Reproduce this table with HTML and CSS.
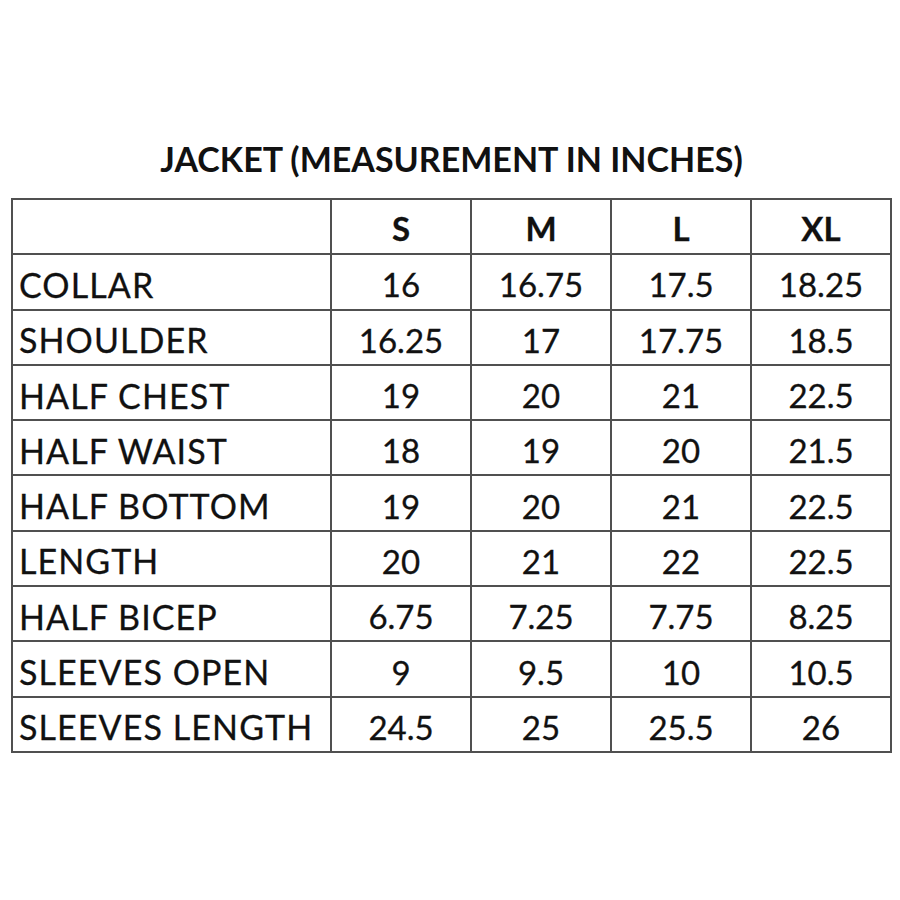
FILE: index.html
```html
<!DOCTYPE html>
<html>
<head>
<meta charset="utf-8">
<link rel="stylesheet" href="styles.css">
</head>
<body>
<div class="page">
  <h1 class="title">JACKET (MEASUREMENT IN INCHES)</h1>
  <table class="chart">
    <colgroup>
      <col class="c-label"><col class="c-size"><col class="c-size"><col class="c-size"><col class="c-size">
    </colgroup>
    <thead>
      <tr><th></th><th>S</th><th>M</th><th>L</th><th>XL</th></tr>
    </thead>
    <tbody>
      <tr><td>COLLAR</td><td>16</td><td>16.75</td><td>17.5</td><td>18.25</td></tr>
      <tr><td>SHOULDER</td><td>16.25</td><td>17</td><td>17.75</td><td>18.5</td></tr>
      <tr><td>HALF CHEST</td><td>19</td><td>20</td><td>21</td><td>22.5</td></tr>
      <tr><td>HALF WAIST</td><td>18</td><td>19</td><td>20</td><td>21.5</td></tr>
      <tr><td>HALF BOTTOM</td><td>19</td><td>20</td><td>21</td><td>22.5</td></tr>
      <tr><td>LENGTH</td><td>20</td><td>21</td><td>22</td><td>22.5</td></tr>
      <tr><td>HALF BICEP</td><td>6.75</td><td>7.25</td><td>7.75</td><td>8.25</td></tr>
      <tr><td>SLEEVES OPEN</td><td>9</td><td>9.5</td><td>10</td><td>10.5</td></tr>
      <tr><td>SLEEVES LENGTH</td><td>24.5</td><td>25</td><td>25.5</td><td>26</td></tr>
    </tbody>
  </table>
</div>
</body>
</html>
```
FILE: styles.css
```css
html, body {
  margin: 0;
  padding: 0;
  background: #ffffff;
}
body {
  font-family: Lato, "Open Sans", sans-serif;
  color: #111;
}
.page {
  padding: 140px 0 0 11px;
  width: 881px;
}
.title {
  margin: 0 0 20px 0;
  text-align: center;
  font-size: 34px;
  font-weight: 700;
  line-height: 38px;
  letter-spacing: 0;
}
.chart {
  border-collapse: collapse;
  table-layout: fixed;
  width: 881px;
}
.c-label { width: 319px; }
.c-size { width: 140px; }
.chart th,
.chart td {
  border: 2px solid #505050;
  height: 47.3px;
  padding: 6px 0 0 0;
  font-size: 33px;
  text-align: center;
  vertical-align: middle;
  line-height: 1;
  -webkit-text-stroke: 0.3px #111;
}
.chart th {
  font-weight: 700;
  padding-top: 4px;
  height: 49.3px;
}
.chart td:first-child {
  text-align: left;
  padding-left: 6px;
  font-size: 34px;
  letter-spacing: 1.1px;
}
```
